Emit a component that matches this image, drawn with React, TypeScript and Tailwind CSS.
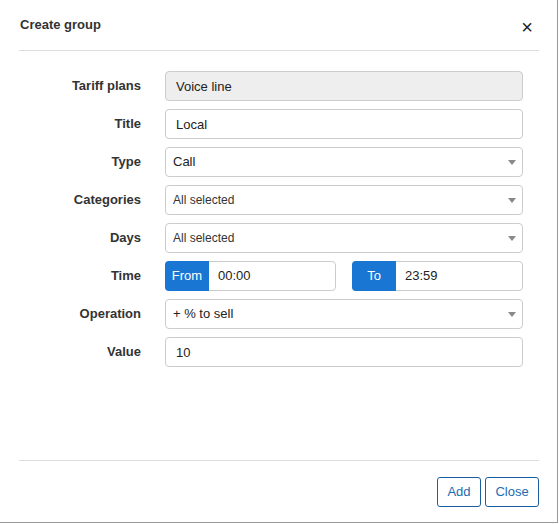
import React from 'react';

const Caret = () => (
  <span className="ml-auto h-0 w-0 border-x-[4px] border-t-[5px] border-x-transparent border-t-[#888]" />
);

const Row = ({ label, children }: { label: string; children: React.ReactNode }) => (
  <div className="flex items-center">
    <label className="w-[141px] text-right text-[13px] font-bold text-[#333]">{label}</label>
    <div className="ml-[24px] w-[358px]">{children}</div>
  </div>
);

const Input = ({ value, disabled }: { value: string; disabled?: boolean }) => (
  <div
    className={`flex h-[30px] items-center rounded-[4px] border border-[#ccc] px-[10px] pt-px text-[13px] text-[#222] ${
      disabled ? 'bg-[#eee]' : 'bg-white'
    }`}
  >
    {value}
  </div>
);

const Select = ({ value, small }: { value: string; small?: boolean }) => (
  <div className="flex h-[30px] items-center rounded-[4px] border border-[#ccc] bg-white pl-[7px] pr-[6px] text-[#222]">
    <span className={small ? 'text-[12px] text-[#333]' : 'text-[13px]'}>{value}</span>
    <Caret />
  </div>
);

const TimeInput = ({ addon, value }: { addon: string; value: string }) => (
  <div className="flex h-[30px] w-[171px] rounded-[4px] border border-[#ccc] bg-white text-[13px]">
    <span className="-m-px flex w-[44px] items-center justify-center rounded-l-[4px] bg-[#1976d2] text-white">
      {addon}
    </span>
    <span className="flex items-center pl-[10px] text-[#222]">{value}</span>
  </div>
);

export default function App() {
  return (
    <div className="h-[524px] w-[559px] bg-white" style={{ fontFamily: '"Liberation Sans", Arial, sans-serif' }}>
      <div className="flex h-[523px] w-[558px] flex-col border-b border-r border-[#999] bg-white">
        <div className="ml-[19px] mr-[18px] flex h-[51px] items-center border-b border-[#ddd] pl-px">
          <h4 className="text-[13px] font-bold text-[#333]">Create group</h4>
          <span className="ml-auto mr-[6px] mt-[4px] text-[20px] leading-none text-[#222]">×</span>
        </div>
        <div className="flex flex-1 flex-col gap-[8px] pt-[20px]">
          <Row label="Tariff plans">
            <Input value="Voice line" disabled />
          </Row>
          <Row label="Title">
            <Input value="Local" />
          </Row>
          <Row label="Type">
            <Select value="Call" />
          </Row>
          <Row label="Categories">
            <Select value="All selected" small />
          </Row>
          <Row label="Days">
            <Select value="All selected" small />
          </Row>
          <Row label="Time">
            <div className="flex justify-between">
              <TimeInput addon="From" value="00:00" />
              <TimeInput addon="To" value="23:59" />
            </div>
          </Row>
          <Row label="Operation">
            <Select value="+ % to sell" />
          </Row>
          <Row label="Value">
            <Input value="10" />
          </Row>
        </div>
        <div className="ml-[19px] mr-[18px] flex h-[62px] items-start justify-end gap-[4px] border-t border-[#ddd] pt-[16px]">
          <button className="h-[30px] w-[44px] rounded-[3px] border border-[#1a5f9e] text-[13px] text-[#1d6bb0]">
            Add
          </button>
          <button className="h-[30px] w-[54px] rounded-[3px] border border-[#1a5f9e] text-[13px] text-[#1d6bb0]">
            Close
          </button>
        </div>
      </div>
    </div>
  );
}
